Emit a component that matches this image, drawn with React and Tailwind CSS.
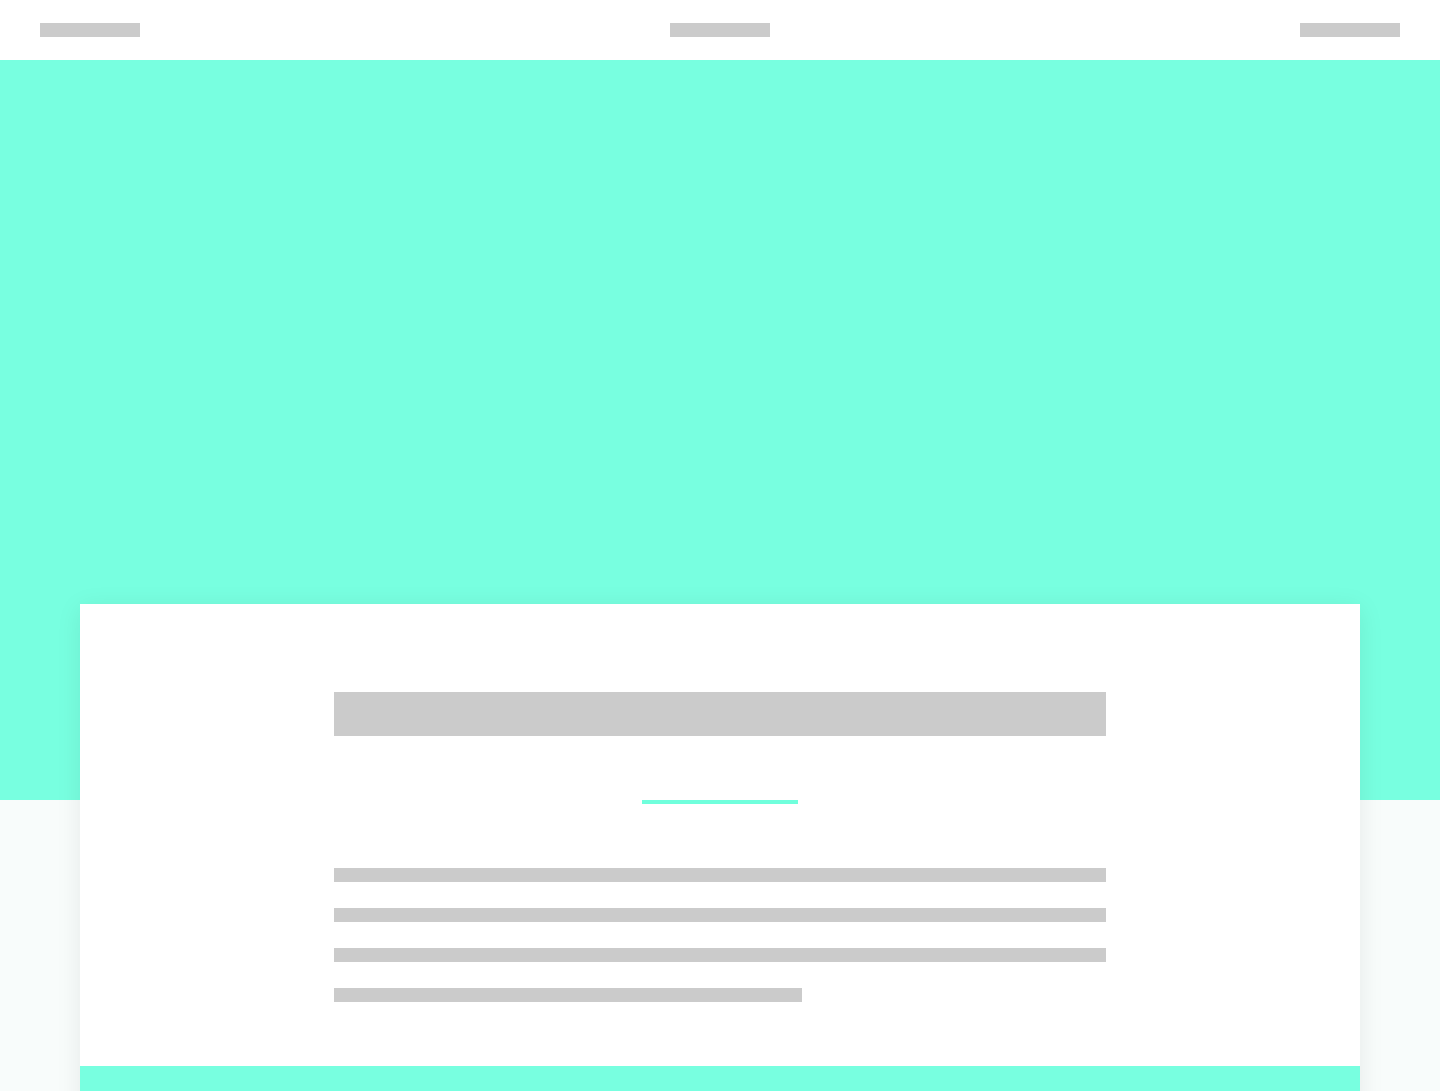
export default function App() {
  return (
    <div className="min-h-screen bg-[#f8fcfb]">
      <header className="flex h-[60px] items-center justify-between bg-white px-10">
        <div className="h-[14px] w-[100px] bg-[#cbcbcb]" />
        <div className="h-[14px] w-[100px] bg-[#cbcbcb]" />
        <div className="h-[14px] w-[100px] bg-[#cbcbcb]" />
      </header>
      <section className="h-[740px] bg-[#78ffe0]" />
      <div className="-mt-[196px] px-20">
        <div className="bg-white shadow-[0_4px_24px_rgba(0,0,0,0.08)]">
          <div className="flex flex-col items-center pt-[88px] pb-16">
            <div className="h-[44px] w-[772px] bg-[#cbcbcb]" />
            <div className="mt-16 h-1 w-[156px] bg-[#70ffdc]" />
            <div className="mt-16 flex w-[772px] flex-col gap-[26px]">
              <div className="h-[14px] w-full bg-[#cbcbcb]" />
              <div className="h-[14px] w-full bg-[#cbcbcb]" />
              <div className="h-[14px] w-full bg-[#cbcbcb]" />
              <div className="h-[14px] w-[468px] bg-[#cbcbcb]" />
            </div>
          </div>
          <div className="h-[60px] bg-[#78ffe0]" />
        </div>
      </div>
    </div>
  );
}
